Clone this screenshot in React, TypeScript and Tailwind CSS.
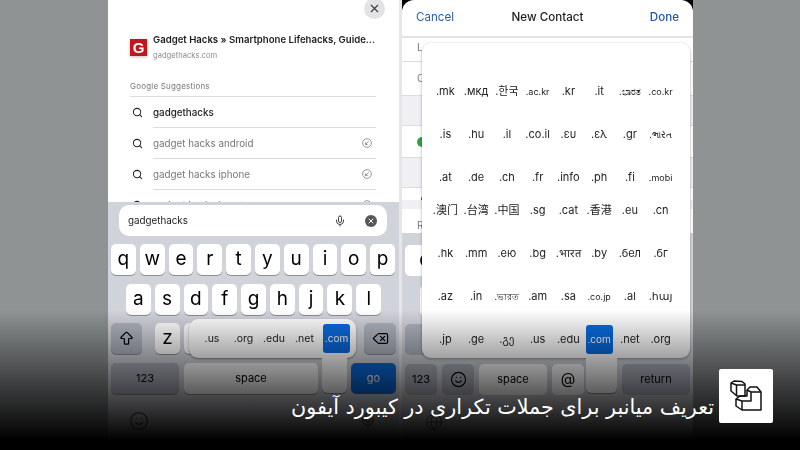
import { ArrowBigUp, Delete, Globe, Mic, Search, Smile, X } from 'lucide-react';

const sans = { fontFamily: 'Inter, "DejaVu Sans", "Noto Sans CJK KR", "Noto Sans CJK SC", sans-serif' };

const row1 = ['q', 'w', 'e', 'r', 't', 'y', 'u', 'i', 'o', 'p'];
const row2 = ['a', 's', 'd', 'f', 'g', 'h', 'j', 'k', 'l'];

const domains = [
  ['.mk', '.мкд', '.한국', '.ac.kr', '.kr', '.it', '.ಭಾರತ', '.co.kr'],
  ['.is', '.hu', '.il', '.co.il', '.ευ', '.ελ', '.gr', '.ભારત'],
  ['.at', '.de', '.ch', '.fr', '.info', '.ph', '.fi', '.mobi'],
  ['.澳门', '.台湾', '.中国', '.sg', '.cat', '.香港', '.eu', '.cn'],
  ['.hk', '.mm', '.ею', '.bg', '.भारत', '.by', '.бел', '.бг'],
  ['.az', '.in', '.ভারত', '.am', '.sa', '.co.jp', '.al', '.հայ'],
  ['.jp', '.ge', '.გე', '.us', '.edu', '.com', '.net', '.org'],
];

const smallDomains = ['.ac.kr', '.ಭಾರತ', '.co.kr', '.ભારત', '.mobi', '.ভারত', '.co.jp'];

function Key({ label }: { label: string }) {
  return (
    <div className="w-[24.8px] h-[31px] bg-white rounded-[5px] shadow-[0_1px_0_#8a8d94] flex items-center justify-center text-[19px] text-black shrink-0">
      {label}
    </div>
  );
}

function DarkKey({ className, children }: { className: string; children: React.ReactNode }) {
  return (
    <div className={`h-[31px] bg-[#aeb3be] rounded-[5px] shadow-[0_1px_0_#8a8d94] flex items-center justify-center text-black shrink-0 ${className}`}>
      {children}
    </div>
  );
}

function FillArrow() {
  return (
    <svg width="10" height="10" viewBox="0 0 12 12" fill="none" stroke="#77777c" strokeWidth="0.9">
      <circle cx="6" cy="6" r="5.2" />
      <path d="M8 4 4.4 7.6M4.2 5.2v2.6h2.6" />
    </svg>
  );
}

function Suggestion({ text, strong }: { text: string; strong?: boolean }) {
  return (
    <div className="flex items-center h-[31px]">
      <Search className="w-[11px] h-[11px] text-[#222] ml-[24px] shrink-0" strokeWidth={2.2} />
      <div className={`ml-[10px] w-[223px] h-full border-b border-[#dcdcdf] flex items-center justify-between pr-[4px] text-[9.8px] ${strong ? 'text-[#222] font-medium' : 'text-[#77777c]'}`}>
        <span className="pt-[2px]">{text}</span>
        {!strong && <FillArrow />}
      </div>
    </div>
  );
}

function LeftPhone() {
  return (
    <div className="relative w-[291px] h-[450px] bg-white flex flex-col overflow-hidden" style={sans}>
      <div className="h-[202px] relative pt-[33px] overflow-hidden">
        <div className="absolute left-[256px] -top-[2px] w-[21px] h-[21px] rounded-full bg-[#e3e3e6] flex items-center justify-center">
          <X className="w-[13px] h-[13px] text-[#3c3c40]" strokeWidth={2} />
        </div>
        <div className="flex items-center ml-[22px]">
          <div className="w-[17px] h-[17px] bg-[#c3161c] flex items-center justify-center text-white text-[15px] font-bold leading-none shadow-[0_1px_3px_rgba(0,0,0,0.25)]" style={{ fontFamily: '"Liberation Sans", sans-serif' }}>
            G
          </div>
          <div className="ml-[6px] flex flex-col">
            <span className="text-[9.6px] font-semibold text-[#1c1c1e] leading-[14px] whitespace-nowrap">Gadget Hacks » Smartphone Lifehacks, Guide...</span>
            <span className="text-[7.6px] text-[#8a8a8e] leading-[12px] mt-[3px]">gadgethacks.com</span>
          </div>
        </div>
        <div className="ml-[22px] w-[246px] mt-[18px] h-[17px] border-b border-[#dcdcdf] text-[8px] text-[#77777c] tracking-[0.2px]">
          Google Suggestions
        </div>
        <Suggestion text="gadgethacks" strong />
        <Suggestion text="gadget hacks android" />
        <Suggestion text="gadget hacks iphone" />
        <Suggestion text="gadget hacks how to" />
      </div>
      <div className="flex-1 relative bg-[#d1d3da] flex flex-col pt-[3px]">
        <div className="mx-[11px] w-[268px] h-[31px] bg-white rounded-[10px] flex items-center px-[9px] text-[9.8px] text-[#1c1c1e]">
          <span className="flex-1 pt-[2px]">gadgethacks</span>
          <Mic className="w-[12px] h-[12px] text-[#444] mr-[19px]" strokeWidth={2} />
          <div className="w-[12px] h-[12px] rounded-full bg-[#55555a] flex items-center justify-center mr-[1px]">
            <X className="w-[8px] h-[8px] text-white" strokeWidth={3} />
          </div>
        </div>
        <div className="flex gap-[4px] pl-[3px] mt-[8px]">
          {row1.map((k) => (
            <Key key={k} label={k} />
          ))}
        </div>
        <div className="flex gap-[4px] justify-center mt-[9px]">
          {row2.map((k) => (
            <Key key={k} label={k} />
          ))}
        </div>
        <div className="flex items-center pl-[3px] pr-[3px] mt-[8px]">
          <DarkKey className="w-[31px]">
            <ArrowBigUp className="w-[17px] h-[17px]" strokeWidth={1.7} />
          </DarkKey>
          <div className="flex gap-[4px] ml-[13px]">
            <Key label="z" />
            {/* the other letters sit under the popup */}
            <Key label="" />
          </div>
          <DarkKey className="w-[32px] ml-auto">
            <Delete className="w-[17px] h-[17px]" strokeWidth={1.7} />
          </DarkKey>
        </div>
        <div className="flex pl-[3px] pr-[3px] mt-[9px] gap-[5px]">
          <DarkKey className="w-[68px] text-[11px]">123</DarkKey>
          <div className="w-[134px] h-[31px] bg-white rounded-[5px] shadow-[0_1px_0_#8a8d94] flex items-center justify-center text-[11px] text-black">space</div>
          <div className="w-[45px] h-[31px] ml-auto bg-[#0a6be0] rounded-[5px] flex items-center justify-center text-[11px] text-white">go</div>
        </div>
        <div className="flex justify-between px-[21px] mt-[17px]">
          <Smile className="w-[20px] h-[20px] text-[#444]" strokeWidth={1.5} />
          <Mic className="w-[18px] h-[18px] text-[#444] mr-[1px]" strokeWidth={1.5} />
        </div>
        {/* .com popup over the third row */}
        <div className="absolute left-[81px] top-[117px] w-[167px] h-[39px] bg-white rounded-[9px] shadow-[0_1px_2px_rgba(0,0,0,0.4)] flex items-center pl-[6px] pr-[6px] text-[10.5px] text-[#222]">
          <span className="w-[34px] text-center">.us</span>
          <span className="w-[29px] text-center">.org</span>
          <span className="w-[32px] text-center">.edu</span>
          <span className="w-[29px] text-center">.net</span>
          <span className="ml-auto w-[27px] h-[29px] bg-[#0a6be0] rounded-[3px] flex items-center justify-center text-white text-[10px]">.com</span>
          <div className="absolute left-[133px] top-[37px] w-[25px] h-[37px] bg-white rounded-b-[5px] shadow-[0_1px_0_#8a8d94]" />
        </div>
      </div>
    </div>
  );
}

function RightPhone() {
  return (
    <div className="relative w-[291px] h-[450px] bg-black rounded-none overflow-hidden" style={sans}>
      <div className="h-full bg-white rounded-t-[12px] flex flex-col">
        <div className="h-[38px] shrink-0 border-b-[2px] border-[#e3e3e6] grid grid-cols-3 items-center px-[14px] text-[11.6px]">
          <span className="text-[#2a5fa8]">Cancel</span>
          <span className="text-[#1c1c1e] font-medium text-center whitespace-nowrap">New Contact</span>
          <span className="text-[#1f56a5] font-medium text-right">Done</span>
        </div>
        <div className="h-[24px] border-b border-[#dcdcdf] pl-[15px] text-[10px] text-[#777] pt-[2px]">L</div>
        <div className="h-[33px] pl-[15px] text-[10px] text-[#777] pt-[9px]">C</div>
        <div className="h-[31px] bg-[#efeff4] border-y border-[#dcdcdf]" />
        <div className="h-[31px] pl-[15px] flex items-center">
          <div className="w-[10px] h-[10px] rounded-full bg-[#35a04a]" />
        </div>
        <div className="h-[31px] bg-[#efeff4] border-y border-[#dcdcdf]" />
        <div className="h-[12px] pl-[19px] flex items-end">
          <div className="w-[6px] h-[4px] rounded-t-full bg-[#c8262c]" />
        </div>
        <div className="h-[9px] bg-[#efeff4]" />
        <div className="h-[24px] pl-[15px] text-[10px] text-[#777] pt-[9px]">R</div>
        <div className="flex-1 bg-[#d1d3da] pt-[12px] flex flex-col">
          <div className="ml-[3px] w-[40px] h-[31px] bg-white rounded-[5px] flex items-center justify-center text-[19px]">q</div>
          <div className="ml-[18px] mt-[9px] w-[40px] h-[31px] bg-white rounded-[5px]" />
          <div className="ml-[3px] mt-[8px] w-[31px] h-[31px] bg-[#aeb3be] rounded-[5px]" />
          <div className="flex px-[3px] mt-[9px] gap-[5px] text-[11px] text-black">
            <div className="w-[32px] h-[31px] bg-[#aeb3be] rounded-[5px] flex items-center justify-center">123</div>
            <div className="w-[32px] h-[31px] bg-[#aeb3be] rounded-[5px] flex items-center justify-center">
              <Smile className="w-[17px] h-[17px]" strokeWidth={1.7} />
            </div>
            <div className="w-[68px] h-[31px] bg-white rounded-[5px] flex items-center justify-center">space</div>
            <div className="w-[32px] h-[31px] bg-white rounded-[5px] flex items-center justify-center text-[15px]">@</div>
            <div className="w-[68px] h-[31px] ml-auto bg-[#aeb3be] rounded-[5px] flex items-center justify-center">return</div>
          </div>
          <Globe className="w-[18px] h-[18px] ml-[23px] mt-[18px] text-[#444]" strokeWidth={1.2} />
        </div>
      </div>
      {/* domain popup covers most of the form */}
      <div className="absolute left-[20px] top-[43px] w-[268px] h-[315px] bg-white rounded-[9px] shadow-[0_1px_3px_rgba(0,0,0,0.35)] pt-[27px] pl-[8px] pr-[14px] grid grid-cols-8 grid-rows-[43px_43px_33px_43px_43px_43px_43px]">
        {domains.flat().map((d, i) =>
          d === '.com' ? (
            <div key={d} className="flex items-center justify-center">
              <span className="w-[27px] h-[29px] bg-[#0a6be0] rounded-[3px] flex items-center justify-center text-[10px] text-white">.com</span>
            </div>
          ) : (
            <div key={d} className={`flex items-center justify-center whitespace-nowrap text-[#222] ${smallDomains.includes(d) ? 'text-[9px]' : 'text-[11px]'} ${i >= 16 && i < 24 ? 'pt-[10px]' : ''}`}>
              {d}
            </div>
          ),
        )}
        <div className="absolute left-[164px] top-[313px] w-[31px] h-[37px] bg-white rounded-b-[5px] shadow-[0_1px_0_#8a8d94]" />
      </div>
    </div>
  );
}

export default function App() {
  return (
    <div className="relative w-[800px] h-[450px] bg-[#8f9394] overflow-hidden">
      <div className="pl-[108px] blur-[0.5px]">
        <div className="flex w-[585px] gap-[3px] bg-[#e6e6ea]">
          <LeftPhone />
          <RightPhone />
        </div>
      </div>
      {/* dark fade and caption lie over the screenshots */}
      <div className="absolute inset-x-0 bottom-0 h-[140px] bg-linear-to-b from-transparent to-black to-[93%]" />
      <div className="absolute right-[27px] top-[369px] flex items-center gap-[5px]">
        <span dir="rtl" className="text-white text-[20.7px] leading-none whitespace-nowrap mt-[23px]" style={{ fontFamily: '"DejaVu Sans", sans-serif' }}>
          تعریف میانبر برای جملات تکراری در کیبورد آیفون
        </span>
        <div className="w-[54px] h-[54px] bg-white rounded-[2px] flex items-center justify-center">
          <svg width="32" height="32" viewBox="0 0 32 32" fill="none" stroke="#111" strokeWidth="1.5" strokeLinejoin="round">
            <path d="M1 3 4 1l8 .5L15 4v12H7l-6-5z" />
            <path d="M1 3l5.5 2H15M6.5 5v11" />
            <path d="M17 10l3-3h7l4 5v18H12l-6-4v-7l4-3h7z" />
            <path d="M17 10l4 2h10M21 12v9H12v9M6 19l6 2" />
          </svg>
        </div>
      </div>
    </div>
  );
}
